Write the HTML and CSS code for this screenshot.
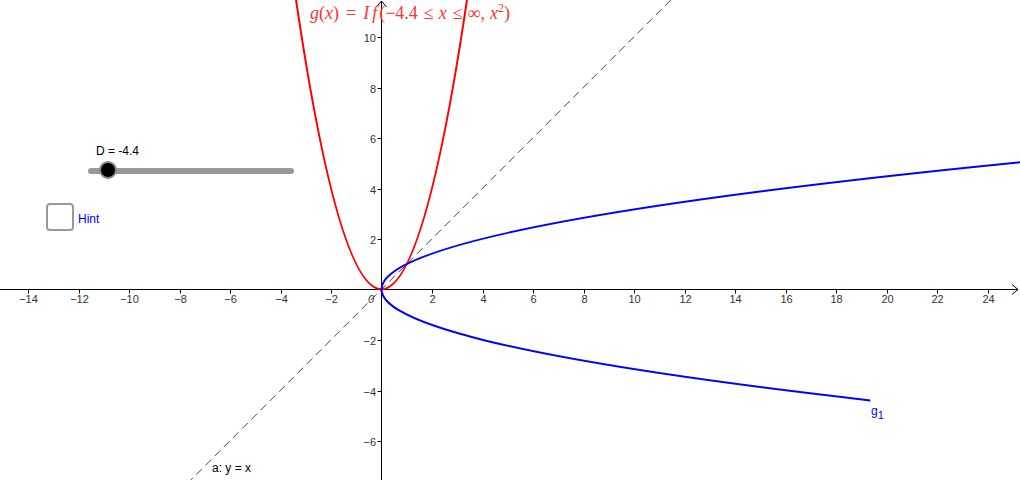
FILE: index.html
```html
<!DOCTYPE html>
<html>
<head>
<meta charset="utf-8">
<link rel="stylesheet" href="styles.css">
</head>
<body>
<div class="applet">
  <svg class="graph" width="1020" height="480" viewBox="0 0 1020 480" xmlns="http://www.w3.org/2000/svg">
    <g class="axes">
      <line x1="0" y1="289.5" x2="1018" y2="289.5"/>
      <polyline points="1012,284.5 1018,289.5 1012,294.5" fill="none"/>
      <line x1="381.5" y1="1" x2="381.5" y2="480"/>
      <polyline points="376.5,7 381.5,1 386.5,7" fill="none"/>
    </g>
    <g class="ticks" id="ticks"></g>
    <g class="xlabels" id="xlabels"></g>
    <g class="ylabels" id="ylabels"></g>
    <text class="zero" x="368" y="303">0</text>
    <line class="dash" x1="187.1" y1="483.7" x2="674.4" y2="-3.6"/>
    <path class="red" d="M294.4,-11.2 Q381.5,589.8 468.6,-11.2"/>
    <path class="blue" d="M870.3,400.4 Q-185.1,280.5 1038.2,160.5"/>
    <text class="lbl" x="212" y="472">a: y = x</text>
    <text class="lblblue" x="871" y="415">g<tspan class="sub" dy="4">1</tspan></text>
  </svg>

  <div class="formula"><i>g</i>(<i>x</i>)<span class="eq">=</span><i>I</i><i class="f">f</i>(−4.4<span class="rel">≤</span><i>x</i><span class="rel">≤</span>∞,<i class="x2">x</i><sup>2</sup>)</div>

  <div class="slider">
    <div class="slider-label">D = -4.4</div>
    <div class="track"><div class="knob"></div></div>
  </div>

  <div class="check">
    <div class="box"></div>
    <span class="hint">Hint</span>
  </div>
</div>
<script src="script.js"></script>
</body>
</html>
```

FILE: styles.css
```css
html, body { margin: 0; padding: 0; background: #fff; }
body { width: 1020px; height: 480px; overflow: hidden; font-family: "Liberation Sans", Arial, sans-serif; }
.applet { position: relative; width: 1020px; height: 480px; }
.graph { display: block; }
.axes line, .axes polyline, .ticks line { stroke: #000; stroke-width: 1; }
.xlabels text { font: 11px "Liberation Sans", Arial, sans-serif; fill: #333; text-anchor: middle; }
.ylabels text { font: 11px "Liberation Sans", Arial, sans-serif; fill: #333; text-anchor: end; }
.zero { font: italic 11px "Liberation Sans", Arial, sans-serif; fill: #333; }
.dash { stroke: #444; stroke-width: 1; stroke-dasharray: 8 5; }
.red { fill: none; stroke: #ff0000; stroke-width: 2; }
.blue { fill: none; stroke: #0000ff; stroke-width: 2; }
.lbl { font: 12px "Liberation Sans", Arial, sans-serif; fill: #000; }
.lblblue { font: 12px "Liberation Sans", Arial, sans-serif; fill: #0000ff; }
.sub { font-size: 11px; }

.formula { position: absolute; left: 310px; top: 3px; font: 18px "Liberation Serif", "Times New Roman", serif; color: #ff3333; white-space: nowrap; }
.formula .eq { display: inline-block; margin: 0 7px 0 7px; }
.formula .f { display: inline-block; margin-left: 3px; margin-right: 2px; }
.formula .rel { display: inline-block; margin: 0 5px 0 6px; }
.formula .x2 { display: inline-block; margin-left: 5px; }
.formula sup { font-size: 12px; vertical-align: 7px; line-height: 0; }

.slider { position: absolute; left: 88px; top: 144px; width: 208px; }
.slider-label { margin-left: 8px; font-size: 12px; color: #000; line-height: 14px; }
.track { position: relative; margin-top: 10px; height: 6px; width: 206px; background: #999; border-radius: 3px; }
.knob { position: absolute; left: 11px; top: -7px; width: 14px; height: 14px; border-radius: 50%; background: #000; border: 2px solid #888; box-sizing: content-box; }

.check { position: absolute; left: 46px; top: 203px; display: flex; align-items: center; gap: 4px; }
.box { width: 24px; height: 24px; border: 2px solid #999; border-radius: 4px; background: #fff; }
.hint { font-size: 12px; color: #0000ff; padding-top: 3px; }
```

FILE: script.js
```js
(function(){
  var ns="http://www.w3.org/2000/svg";
  var ox=381.5, oy=289.5, s=25.25;
  var t=document.getElementById('ticks'), xl=document.getElementById('xlabels'), yl=document.getElementById('ylabels');
  function el(n,a,txt){var e=document.createElementNS(ns,n);for(var k in a)e.setAttribute(k,a[k]);if(txt)e.textContent=txt;return e;}
  for(var v=-14;v<=24;v+=2){ if(v===0)continue; var x=Math.round(ox+s*v)+0.5;
    t.appendChild(el('line',{x1:x,y1:oy,x2:x,y2:oy+4}));
    xl.appendChild(el('text',{x:x,y:303},(v<0?'\u2212':'')+Math.abs(v)));}
  for(var w=-6;w<=10;w+=2){ if(w===0)continue; var y=Math.round(oy-s*w)+0.5;
    t.appendChild(el('line',{x1:ox-4,y1:y,x2:ox,y2:y}));
    yl.appendChild(el('text',{x:376,y:y+4},(w<0?'\u2212':'')+Math.abs(w)));}
})();
```
